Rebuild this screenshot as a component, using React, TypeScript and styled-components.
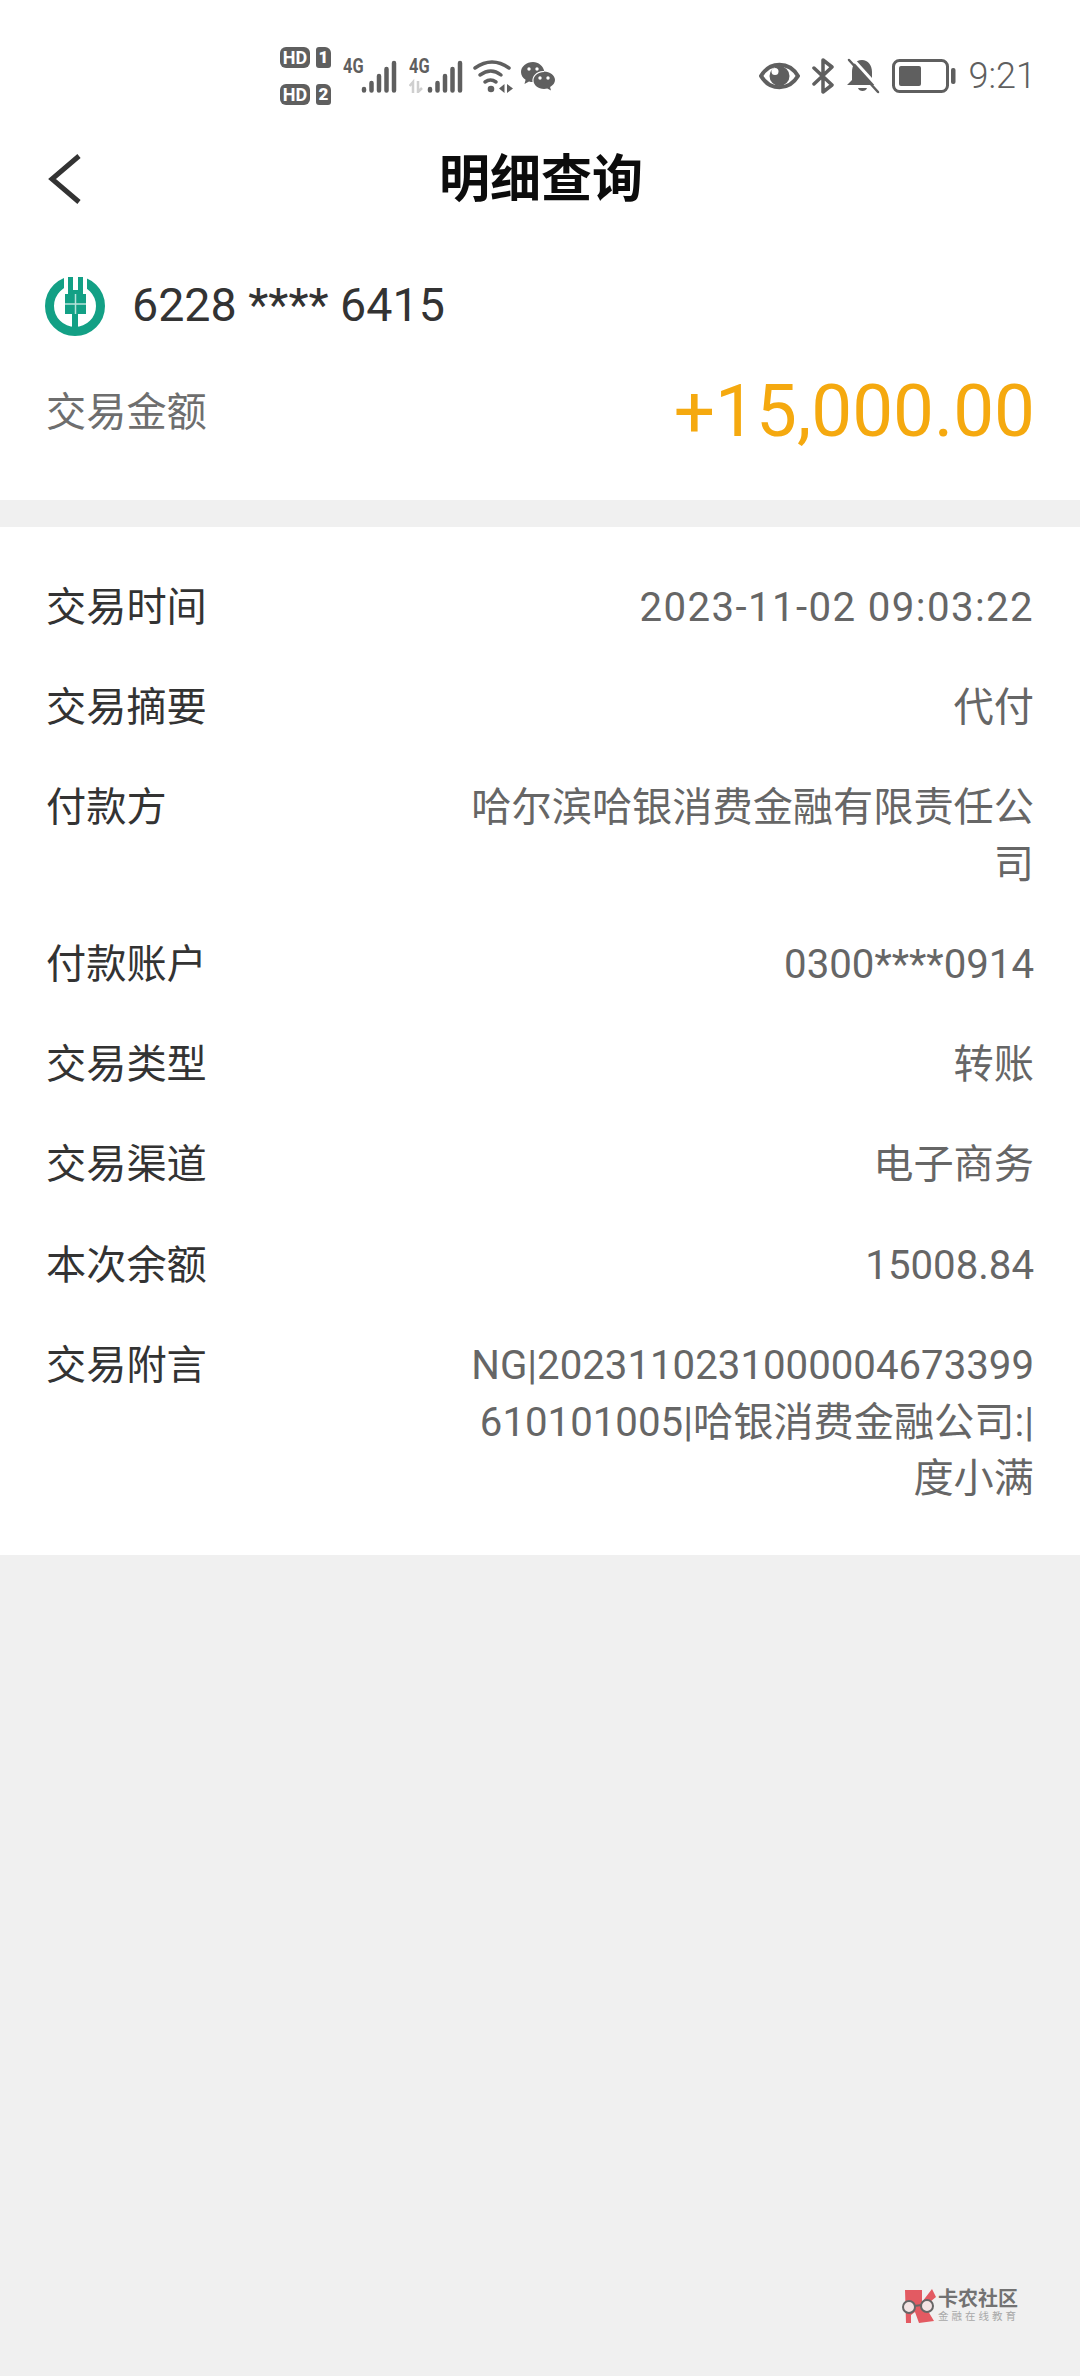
import { FC } from "react";
import styled, { createGlobalStyle } from "styled-components";

const GlobalStyle = createGlobalStyle`
  html, body {
    margin: 0;
    padding: 0;
    background: #f0f0f0;
    font-family: Roboto, "Noto Sans CJK SC", sans-serif;
  }
  * { box-sizing: border-box; }
`;

const Page = styled.div`
  position: relative;
  width: 1080px;
  height: 2376px;
  overflow: hidden;
  background: #f0f0f0;
`;

const StatusBar = styled.div`
  display: flex;
  align-items: center;
  justify-content: space-between;
  height: 110px;
  padding: 42px 44px 0 280px;
  background: #fff;
  color: #5f5f5f;
`;
const StatusGroup = styled.div<{ $gap: number }>`
  display: flex;
  align-items: center;
  gap: ${(p) => p.$gap}px;
`;
const SimStack = styled.div`
  display: flex;
  flex-direction: column;
  gap: 16px;
`;
const SimRow = styled.div`
  display: flex;
  gap: 6px;
`;
const HdBadge = styled.span`
  width: 30px;
  height: 21px;
  border-radius: 6px;
  background: #5f5f5f;
  color: #fff;
  font: 700 18px/21px Roboto, sans-serif;
  text-align: center;
`;
const SimBadge = styled.span`
  width: 15px;
  height: 21px;
  border-radius: 3px 6px 3px 3px;
  background: #5f5f5f;
  color: #fff;
  font: 900 17px/21px Roboto, sans-serif;
  text-align: center;
`;
const Signal = styled.div`
  position: relative;
  width: 54px;
  height: 34px;
`;
const SignalLabel = styled.span`
  position: absolute;
  left: 0;
  top: -3px;
  font: 700 21px/21px Roboto, sans-serif;
  color: #5f5f5f;
  transform: scaleX(0.78);
  transform-origin: left;
`;
const WifiIcon = styled.svg`
  margin: 0 -4px 0 -2px;
`;
const Clock = styled.span`
  margin-left: 1px;
  font-size: 36px;
  line-height: 36px;
  font-weight: 300;
  color: #5f5f5f;
`;

const Header = styled.div`
  display: grid;
  grid-template-columns: 1fr auto 1fr;
  align-items: center;
  height: 138px;
  padding: 0 47px;
  background: #fff;
`;
const Title = styled.h1`
  margin: 2px 0 0 2px;
  font-size: 51px;
  font-weight: 700;
  line-height: 60px;
  color: #0c0c0c;
`;

const Summary = styled.div`
  display: flex;
  flex-direction: column;
  gap: 25px;
  padding: 28px 45px 39px 45px;
  background: #fff;
`;
const AccountRow = styled.div`
  display: flex;
  align-items: center;
  gap: 27px;
  height: 60px;
`;
const AccountNo = styled.span`
  margin-bottom: 2px;
  font-size: 46.6px;
  color: #333;
`;
const AmountRow = styled.div`
  display: flex;
  align-items: center;
  justify-content: space-between;
  height: 100px;
  padding-left: 1px;
`;
const AmountLabel = styled.span`
  margin-bottom: 6px;
  font-size: 40.2px;
  color: #6e6e6e;
`;
const Amount = styled.span`
  font-size: 72.8px;
  color: #f5a90f;
`;

const Details = styled.div`
  display: flex;
  flex-direction: column;
  gap: 43.8px;
  margin-top: 27px;
  padding: 52.5px 46px 47.5px;
  background: #fff;
`;
const Row = styled.div`
  display: flex;
  justify-content: space-between;
  font-size: 40.2px;
  line-height: 56.5px;
`;
const Label = styled.span`
  flex: none;
  color: #333;
`;
const Value = styled.span<{ $tracking?: number }>`
  width: 572px;
  text-align: right;
  word-break: break-all;
  letter-spacing: ${(p) => p.$tracking ?? 0}px;
  color: #666;
`;

const Watermark = styled.div`
  position: absolute;
  left: 900px;
  top: 2288px;
  display: flex;
  align-items: center;
  gap: 2px;
`;
const MarkText = styled.div`
  display: flex;
  flex-direction: column;
`;
const MarkTitle = styled.span`
  font-size: 20px;
  line-height: 22px;
  font-weight: 700;
  color: #727272;
`;
const MarkSub = styled.span`
  font-size: 10.5px;
  line-height: 14px;
  letter-spacing: 3px;
  color: #a8a8a8;
`;

const rows: { label: string; value: string; tracking?: number }[] = [
  { label: "交易时间", value: "2023-11-02 09:03:22", tracking: 1.4 },
  { label: "交易摘要", value: "代付" },
  { label: "付款方", value: "哈尔滨哈银消费金融有限责任公司" },
  { label: "付款账户", value: "0300****0914" },
  { label: "交易类型", value: "转账" },
  { label: "交易渠道", value: "电子商务" },
  { label: "本次余额", value: "15008.84" },
  { label: "交易附言", value: "NG|2023110231000004673399610101005|哈银消费金融公司:|度小满" },
];

const Bars: FC<{ arrows?: boolean }> = ({ arrows }) => (
  <svg width="54" height="34" viewBox="0 0 54 34" fill="none" stroke="#5f5f5f" strokeWidth="4.5" strokeLinecap="round">
    <path d="M21 30v1.500M28.500 24v7.500M36 17v14.500M43.500 10v21.500M51 4v27.500" />
    {arrows && (
      <path d="M4 34v-11l-3.500 4M9 22v11l4-4" stroke="#cfcfcf" strokeWidth="2.500" strokeLinecap="butt" />
    )}
  </svg>
);

const App: FC = () => (
  <Page>
    <GlobalStyle />
    <StatusBar>
      <StatusGroup $gap={12}>
        <SimStack>
          <SimRow>
            <HdBadge>HD</HdBadge>
            <SimBadge>1</SimBadge>
          </SimRow>
          <SimRow>
            <HdBadge>HD</HdBadge>
            <SimBadge>2</SimBadge>
          </SimRow>
        </SimStack>
        <Signal>
          <SignalLabel>4G</SignalLabel>
          <Bars />
        </Signal>
        <Signal>
          <SignalLabel>4G</SignalLabel>
          <Bars arrows />
        </Signal>
        <WifiIcon width="40" height="34" viewBox="0 0 40 34" fill="none" stroke="#5f5f5f" strokeWidth="3.500" strokeLinecap="round">
          <path d="M2 9Q19 -3 36 9" />
          <path d="M7 16Q18 8 28 16" />
          <path d="M12 23Q17.500 19 23 23" />
          <circle cx="18" cy="30" r="3.300" fill="#5f5f5f" stroke="none" />
          <path d="M31.500 25v9l-5.500-4.500zM34 25l6 4.500-6 4.500z" fill="#5f5f5f" stroke="none" />
        </WifiIcon>
        <svg width="34" height="30" viewBox="0 0 34 30" fill="#5f5f5f">
          <path d="M12 1C5.500 1 0 5.500 0 11c0 3.200 1.800 6 4.600 7.800L3.500 23l4.500-2.500c1.300.4 2.600.5 3.500.5-1-5.500 4-11 10.500-11h1.200C22.200 5 17.500 1 12 1z" />
          <path d="M23 11c-5.800 0-10.500 3.800-10.500 8.500S17.200 28 23 28c1.200 0 2.300-.2 3.300-.5l3.700 2-.9-3.500c2.900-1.600 4.900-4.200 4.900-7 0-4.700-5.200-8.500-11-8.500z" />
          <circle cx="8" cy="8" r="1.700" fill="#fff" />
          <circle cx="16" cy="8" r="1.700" fill="#fff" />
          <circle cx="19" cy="17" r="1.700" fill="#fff" />
          <circle cx="27" cy="17" r="1.700" fill="#fff" />
        </svg>
      </StatusGroup>
      <StatusGroup $gap={12}>
        <svg width="41" height="28" viewBox="0 0 41 28" fill="none">
          <path d="M2 14C11 -1 30 -1 39 14C30 29 11 29 2 14Z" stroke="#5f5f5f" strokeWidth="4" strokeLinejoin="round" />
          <circle cx="20.500" cy="14" r="10" fill="#5f5f5f" />
          <circle cx="16" cy="9.500" r="3.500" fill="#fff" />
        </svg>
        <svg width="22" height="36" viewBox="0 0 22 36" fill="none" stroke="#5f5f5f" strokeWidth="3.500" strokeLinejoin="round" strokeLinecap="round">
          <path d="M2 10l18 17-9 7V2l9 7L2 26" />
        </svg>
        <svg width="34" height="36" viewBox="0 0 34 36" fill="none">
          <path d="M16 2C9 2 6 8 6 14v8l-5 5h28l-3-4V14C26 7 22 2 16 2z" fill="#5f5f5f" />
          <path d="M12 30h9c-1 4-8 4-9 0z" fill="#5f5f5f" />
          <path d="M5 -1l29 32" stroke="#fff" strokeWidth="3" />
          <path d="M3 2l29 32" stroke="#5f5f5f" strokeWidth="2.500" strokeLinecap="round" />
        </svg>
        <svg width="64" height="34" viewBox="0 0 64 34" fill="none">
          <rect x="1.500" y="1.500" width="54" height="31" rx="6" stroke="#5f5f5f" strokeWidth="3" />
          <rect x="7" y="7" width="22" height="20" rx="2" fill="#5f5f5f" />
          <rect x="59" y="9" width="4.500" height="16" rx="2" fill="#5f5f5f" />
        </svg>
        <Clock>9:21</Clock>
      </StatusGroup>
    </StatusBar>

    <Header>
      <svg width="34" height="50" viewBox="0 0 34 50" fill="none" stroke="#333" strokeWidth="5">
        <path d="M32 2L5 25l27 23" />
      </svg>
      <Title>明细查询</Title>
    </Header>

    <Summary>
      <AccountRow>
        <svg width="60" height="60" viewBox="0 0 60 60" fill="none">
          <circle cx="30" cy="30" r="25.500" stroke="#13a085" strokeWidth="9" />
          <rect x="19" y="0" width="23" height="18" fill="#fff" />
          <path d="M23 1h5v13h5V1h5v17h3v20h-8v20h-6V38h-7V18h3z" fill="#13a085" />
          <path d="M19 28h23M30.500 18v20" stroke="#fff" strokeWidth="1.500" opacity="0.7" />
        </svg>
        <AccountNo>6228 **** 6415</AccountNo>
      </AccountRow>
      <AmountRow>
        <AmountLabel>交易金额</AmountLabel>
        <Amount>+15,000.00</Amount>
      </AmountRow>
    </Summary>

    <Details>
      {rows.map((row) => (
        <Row key={row.label}>
          <Label>{row.label}</Label>
          <Value $tracking={row.tracking}>{row.value}</Value>
        </Row>
      ))}
    </Details>

    <Watermark>
      <svg width="36" height="36" viewBox="0 0 36 36">
        <path d="M5 2h17v12L32 1l4 8-11 9 9 15-15 2-4-11-4 3v8H6z" fill="#e35a62" />
        <circle cx="9" cy="19" r="6" fill="#f3e4e4" stroke="#666" strokeWidth="2" />
        <circle cx="27" cy="18" r="6" fill="#f3e4e4" stroke="#666" strokeWidth="2" />
        <path d="M14 18l8-1" stroke="#666" strokeWidth="2" />
      </svg>
      <MarkText>
        <MarkTitle>卡农社区</MarkTitle>
        <MarkSub>金融在线教育</MarkSub>
      </MarkText>
    </Watermark>
  </Page>
);

export default App;
